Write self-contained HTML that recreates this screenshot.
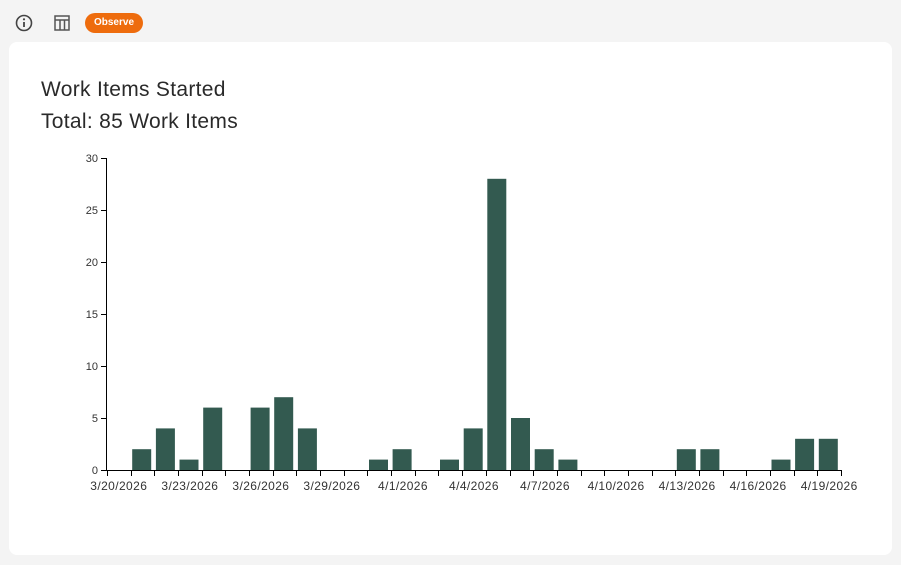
<!DOCTYPE html>
<html><head><style>
body{margin:0;width:901px;height:565px;background:#f4f4f4;font-family:"Liberation Sans",sans-serif;position:relative;overflow:hidden}
.card{position:absolute;left:9px;top:42px;width:883px;height:513px;background:#fff;border-radius:8px}
.t{position:absolute;left:41px;font-size:21px;color:#2a2a2a;letter-spacing:0.3px}
.badge{position:absolute;left:85px;top:13px;width:58px;height:20px;border-radius:10px;background:#ee6c0d;color:#fff;font-size:10px;font-weight:bold;text-align:center;line-height:20px}
</style></head><body>
<svg style="position:absolute;left:14px;top:13px" width="20" height="20" viewBox="0 0 20 20"><circle cx="10" cy="10" r="7.5" fill="none" stroke="#444" stroke-width="1.6"/><line x1="10" y1="9" x2="10" y2="14" stroke="#444" stroke-width="1.8"/><circle cx="10" cy="6.3" r="1.1" fill="#444"/></svg>
<svg style="position:absolute;left:53px;top:14px" width="18" height="18" viewBox="0 0 18 18"><rect x="2" y="2" width="14" height="14" fill="none" stroke="#555" stroke-width="1.5"/><line x1="2" y1="6" x2="16" y2="6" stroke="#555" stroke-width="1.5"/><line x1="7" y1="6" x2="7" y2="16" stroke="#555" stroke-width="1.5"/><line x1="11.5" y1="6" x2="11.5" y2="16" stroke="#555" stroke-width="1.5"/></svg>
<div class="badge">Observe</div>
<div class="card"></div>
<div class="t" style="top:78px">Work Items Started</div>
<div class="t" style="top:110px">Total: 85 Work Items</div>
<svg id="c" style="position:absolute;left:0;top:0" width="901" height="565"></svg>
<script>
var v=[0,2,4,1,6,0,6,7,4,0,0,1,2,0,1,4,28,5,2,1,0,0,0,0,2,2,0,0,1,3,3];
var s='',x0=107,w=734/31,y0=470,k=10.4;
v.forEach(function(d,i){if(d){var x=x0+i*w+1.5;s+='<rect x="'+x.toFixed(1)+'" y="'+(y0-d*k).toFixed(1)+'" width="19" height="'+(d*k).toFixed(1)+'" fill="#335a50"/>';}});
s+='<line x1="107" y1="470.5" x2="841" y2="470.5" stroke="#000"/><line x1="106.5" y1="158" x2="106.5" y2="471" stroke="#000"/>';
for(var i=0;i<=31;i++){var x=Math.round(x0+i*w)+.5;s+='<line x1="'+x+'" y1="470" x2="'+x+'" y2="476" stroke="#000"/>';}
for(var j=0;j<=6;j++){var y=y0-j*5*k;s+='<line x1="101" y1="'+(y+.5)+'" x2="107" y2="'+(y+.5)+'" stroke="#000"/><text x="98" y="'+(y+4)+'" text-anchor="end" font-size="11" fill="#333" font-family="Liberation Sans">'+(j*5)+'</text>';}
var L=['3/20/2026','3/23/2026','3/26/2026','3/29/2026','4/1/2026','4/4/2026','4/7/2026','4/10/2026','4/13/2026','4/16/2026','4/19/2026'];
L.forEach(function(t,n){var x=x0+(n*3+.5)*w;s+='<text x="'+x.toFixed(1)+'" y="490" text-anchor="middle" font-size="12" letter-spacing="0.4" fill="#333" font-family="Liberation Sans">'+t+'</text>';});
document.getElementById('c').innerHTML=s;
</script>
</body></html>
